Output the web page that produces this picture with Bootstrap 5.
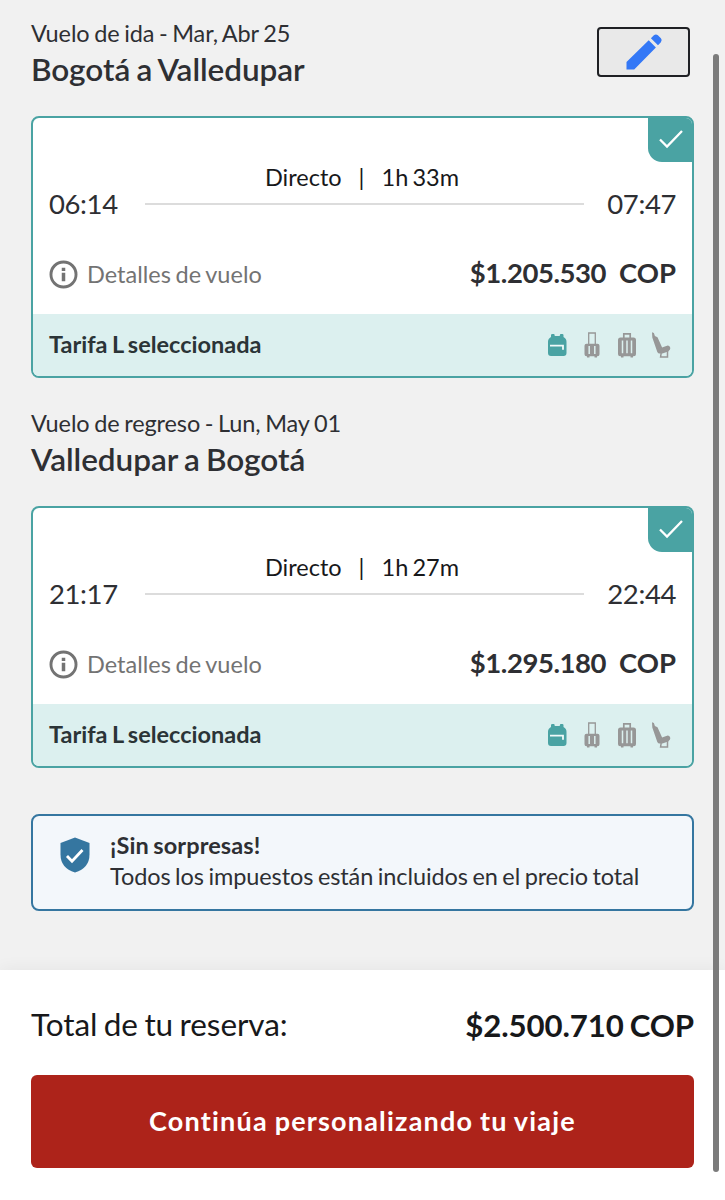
<!DOCTYPE html>
<html lang="es">
<head>
<meta charset="utf-8">
<meta name="viewport" content="width=device-width, initial-scale=1">
<title>Resumen de vuelos</title>
<link href="https://cdn.jsdelivr.net/npm/bootstrap@5.3.0/dist/css/bootstrap.min.css" rel="stylesheet">
<style>
  body { font-family: Lato, "Liberation Sans", sans-serif; background: #f1f1f1; color: #2e2f33; height: 1200px; overflow: hidden; }
  .gutter { padding-left: 31px; padding-right: 31px; }
  .main-area { padding-top: 20px; height: 970px; }
  .leg { margin-bottom: 32px; }
  .leg-head { height: 96px; }
  .leg-date { font-size: 23.5px; line-height: 27px; word-spacing: -1.3px; letter-spacing: -.1px; }
  .leg-title { font-size: 31.5px; line-height: 44px; font-weight: 600; margin: 0; word-spacing: -1.5px; letter-spacing: -.05px; }
  .edit-btn { width: 93px; height: 50px; margin: 7px 4px 0 0; padding: 0; border: 2px solid #1f2024; border-radius: 4px; background: #e9e9e9; }
  .flight { height: 262px; border: 2px solid #4aa3a3; border-radius: 8px; overflow: hidden; --bs-card-bg: #fff; color: inherit; }
  .tick { width: 46px; height: 46px; top: -2px; right: -2px; background: #4aa3a3; border-bottom-left-radius: 14px; }
  .times { padding: 44px 16px 0; height: 102px; }
  .clock { font-size: 27.5px; line-height: 34px; margin-top: 25px; width: 69px; letter-spacing: -.4px; white-space: nowrap; }
  .route { margin: 0 23px 0 27px; }
  .route-info { font-size: 23.5px; line-height: 30px; color: #17181a; padding-bottom: 11px; border-bottom: 2px solid #dcdcdc; height: 43px; gap: 17px; word-spacing: -1.8px; padding-right: 5px; }
  .cost { padding: 14px 16px 0 16px; height: 94px; }
  .details { font-size: 23.5px; color: #737373; gap: 9px; text-decoration: none; word-spacing: -1.3px; padding-top: 1px; }
  .amount { font-size: 27.5px; font-weight: 700; gap: 13px; margin-top: -3px; }
  .digits { letter-spacing: -.45px; }
  .fare { height: 62px; padding: 0 16px; background: #dcf0ef; font-size: 23.5px; font-weight: 700; color: #2b3437; word-spacing: -1.3px; }
  .perks { gap: 7px; }
  .notice { margin-top: 46px; height: 97px; border: 2px solid #3576a0; border-radius: 8px; background: #f3f7fb; padding: 0 20px 3px 28px; }
  .notice-icon { margin-top: -13px; margin-left: -1px; }
  .notice-text { font-size: 23.5px; line-height: 31px; margin-left: 20px; word-spacing: -1.3px; letter-spacing: -.1px; }
  .notice-text strong { letter-spacing: .1px; }
  .footer-bar { height: 230px; padding-top: 33px; background: #fff; box-shadow: 0 -3px 14px rgba(0,0,0,.045); color: #17181a; }
  .total-row { height: 44px; font-size: 31.5px; word-spacing: -1.5px; letter-spacing: -.08px; }
  .total-sum { font-size: 31.2px; font-weight: 700; word-spacing: -1.6px; letter-spacing: -.1px; }
  .go-btn, .go-btn:hover { height: 93px; margin-top: 28px; padding-bottom: 6px; border-radius: 6px; border: 0; background: #ad231a; color: #fff; font-size: 27px; font-weight: 700; letter-spacing: 1.2px; word-spacing: -1px; }
  .scroll-thumb { top: 54px; right: 6px; width: 6px; height: 1118px; border-radius: 3px; background: #7b7b7b; z-index: 5; }
</style>
</head>
<body>
<svg class="d-none">
  <symbol id="i-check" viewBox="0 0 46 46"><path d="M12 23.500l7 7L34 15" fill="none" stroke="#fff" stroke-width="2.3"/></symbol>
  <symbol id="i-info" viewBox="0 0 28 28"><circle cx="14" cy="14" r="12.1" fill="none" stroke="#737373" stroke-width="2.800"/><path d="M12.3 7.5h3.4v3h-3.4zM12.3 12.2h3.4v8.3h-3.4z" fill="#737373"/></symbol>
  <symbol id="i-backpack" viewBox="0 0 28 30"><path d="M8 7V5.200q0-1.200 1.200-1.200h1.300q1.200 0 1.200 1.200V6h5.100V5.200q0-1.200 1.200-1.200h1.300q1.200 0 1.200 1.200V7q3 1.600 3 4.800V23q0 3-3 3H8q-3 0-3-3V11.800Q5 8.600 8 7z" fill="#4aa3a3"/><path d="M7 15.700h13v4" fill="none" stroke="#f0faf9" stroke-width="1.800"/></symbol>
  <symbol id="i-carry" viewBox="0 0 28 30"><path d="M10.700 14V3h6.600v11" fill="none" stroke="#979797" stroke-width="1.300"/><path d="M8.500 13.800h11q2 0 2 2v8.400q0 2-2 2H19v1.400h-2.500v-1.400h-5v1.400H9v-1.400h-.5q-2 0-2-2v-8.400q0-2 2-2z" fill="#979797"/><path d="M11.200 16v8M16.800 16v8" stroke="#dcf0ef" stroke-width="1.500"/></symbol>
  <symbol id="i-suitcase" viewBox="0 0 28 30"><path d="M10.800 8V3.800h6.400V8" fill="none" stroke="#979797" stroke-width="1.700"/><path d="M7.500 7.500h13q2.500 0 2.500 2.500v13.700q0 2.500-2.500 2.500H20v1.400h-2.500v-1.400h-7v1.400H8v-1.400h-.5Q5 26.200 5 23.700V10q0-2.500 2.500-2.500z" fill="#979797"/><path d="M9.500 10.500v12.800M14 10.500v12.800M18.500 10.500v12.800" stroke="#dcf0ef" stroke-width="1.500"/></symbol>
  <symbol id="i-seat" viewBox="0 0 28 30"><path d="M4 2.300l1.900.6 1 3.200 2.600 1.200 4.600 10.200 4.200-1.500q1.600-1 3.200.2 1.400 1.600.5 3.400l-1.800 2-5.800 1.800h-2.700q-1.700 0-2.400-1.500L4.300 7.500z" fill="#979797"/><path d="M13.300 22l-.7 4.900h6.900v-6" fill="none" stroke="#979797" stroke-width="1.500"/></symbol>
</svg>

<div class="scroll-thumb position-absolute"></div>

<main class="main-area gutter">
  <section class="leg">
    <div class="leg-head d-flex justify-content-between align-items-start">
      <div>
        <div class="leg-date">Vuelo de ida - Mar, Abr 25</div>
        <h2 class="leg-title">Bogotá a Valledupar</h2>
      </div>
      <button class="edit-btn d-flex align-items-center justify-content-center" aria-label="Editar">
        <svg width="38" height="38" viewBox="0 0 38 38" fill="#3478f6"><path d="M1.500 36.500v-7.600L23.700 7.300l7.200 7.200L9.200 36.500zM25.900 5.300l3-3q2-1.700 4 0l3 3q1.800 2 0 4l-2.900 2.900z"/></svg>
      </button>
    </div>
    <div class="card flight">
      <div class="tick position-absolute"><svg width="46" height="46" class="d-block"><use href="#i-check"/></svg></div>
      <div class="times d-flex">
        <div class="clock">06:14</div>
        <div class="route flex-grow-1"><div class="route-info d-flex justify-content-center"><span>Directo</span><span>|</span><span>1h 33m</span></div></div>
        <div class="clock text-end">07:47</div>
      </div>
      <div class="cost d-flex align-items-center justify-content-between">
        <a class="details d-flex align-items-center"><svg width="29" height="29"><use href="#i-info"/></svg>Detalles de vuelo</a>
        <div class="amount d-flex"><span class="digits">$1.205.530</span><span>COP</span></div>
      </div>
      <div class="fare d-flex align-items-center justify-content-between">
        <span>Tarifa L seleccionada</span>
        <div class="perks d-flex"><svg width="28" height="30"><use href="#i-backpack"/></svg><svg width="28" height="30"><use href="#i-carry"/></svg><svg width="28" height="30"><use href="#i-suitcase"/></svg><svg width="28" height="30"><use href="#i-seat"/></svg></div>
      </div>
    </div>
  </section>

  <section class="leg mb-0">
    <div class="leg-head">
      <div class="leg-date">Vuelo de regreso - Lun, May 01</div>
      <h2 class="leg-title">Valledupar a Bogotá</h2>
    </div>
    <div class="card flight">
      <div class="tick position-absolute"><svg width="46" height="46" class="d-block"><use href="#i-check"/></svg></div>
      <div class="times d-flex">
        <div class="clock">21:17</div>
        <div class="route flex-grow-1"><div class="route-info d-flex justify-content-center"><span>Directo</span><span>|</span><span>1h 27m</span></div></div>
        <div class="clock text-end">22:44</div>
      </div>
      <div class="cost d-flex align-items-center justify-content-between">
        <a class="details d-flex align-items-center"><svg width="29" height="29"><use href="#i-info"/></svg>Detalles de vuelo</a>
        <div class="amount d-flex"><span class="digits">$1.295.180</span><span>COP</span></div>
      </div>
      <div class="fare d-flex align-items-center justify-content-between">
        <span>Tarifa L seleccionada</span>
        <div class="perks d-flex"><svg width="28" height="30"><use href="#i-backpack"/></svg><svg width="28" height="30"><use href="#i-carry"/></svg><svg width="28" height="30"><use href="#i-suitcase"/></svg><svg width="28" height="30"><use href="#i-seat"/></svg></div>
      </div>
    </div>
  </section>

  <div class="notice d-flex align-items-center">
    <svg class="notice-icon" width="30" height="36" viewBox="0 0 30 36"><path d="M15 .5L29.500 6v11.500Q29.500 31 15 35.500.5 31 .5 17.500V6z" fill="#3576a0"/><path d="M7 19l5 5.200L22.500 13" fill="none" stroke="#fff" stroke-width="2.800"/></svg>
    <div class="notice-text"><strong>¡Sin sorpresas!</strong><br>Todos los impuestos están incluidos en el precio total</div>
  </div>
</main>

<footer class="footer-bar gutter position-relative">
  <div class="total-row d-flex align-items-center justify-content-between">
    <span class="total-label">Total de tu reserva:</span>
    <span class="total-sum">$2.500.710 COP</span>
  </div>
  <button class="go-btn btn w-100">Continúa personalizando tu viaje</button>
</footer>
<script src="https://cdn.jsdelivr.net/npm/bootstrap@5.3.0/dist/js/bootstrap.bundle.min.js"></script>
</body>
</html>
